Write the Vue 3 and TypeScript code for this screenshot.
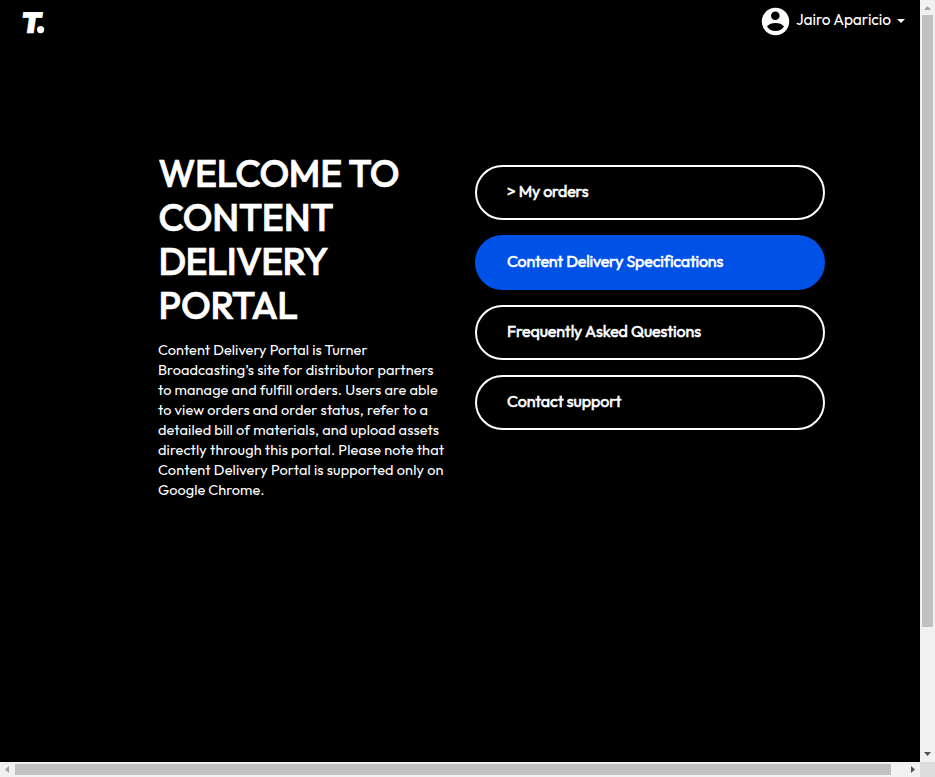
<script setup lang="ts">
import { nextTick, onMounted, ref } from 'vue'

interface Line {
  text: string
  width: number
}

const heading: Line[] = [
  { text: 'WELCOME TO', width: 241 },
  { text: 'CONTENT', width: 175 },
  { text: 'DELIVERY', width: 170 },
  { text: 'PORTAL', width: 139.5 },
]

const intro: Line[] = [
  { text: 'Content Delivery Portal is Turner', width: 209.5 },
  { text: 'Broadcasting’s site for distributor partners', width: 275.5 },
  { text: 'to manage and fulfill orders. Users are able', width: 279 },
  { text: 'to view orders and order status, refer to a', width: 270 },
  { text: 'detailed bill of materials, and upload assets', width: 281 },
  { text: 'directly through this portal. Please note that', width: 286 },
  { text: 'Content Delivery Portal is supported only on', width: 285.5 },
  { text: 'Google Chrome.', width: 106.5 },
]

const links = [
  { text: '> My orders', width: 81.5, active: false },
  { text: 'Content Delivery Specifications', width: 215.5, active: true },
  { text: 'Frequently Asked Questions', width: 194, active: false },
  { text: 'Contact support', width: 114.5, active: false },
]

const root = ref<HTMLElement | null>(null)

// Tracks each line so that it fills its intended measure.
onMounted(async () => {
  await nextTick()
  root.value?.querySelectorAll<HTMLElement>('[data-measure]').forEach((el) => {
    const count = (el.textContent ?? '').length
    const natural = el.getBoundingClientRect().width
    const spacing = (Number(el.dataset.measure) - natural) / (count - 1)
    el.style.letterSpacing = `${spacing.toFixed(3)}px`
  })
})
</script>

<template>
  <div ref="root" class="window">
    <div class="page">
      <header class="topbar">
        <svg class="logo" width="24" height="24" viewBox="0 0 24 24" aria-label="T.">
          <text class="logo-letter" x="1.2" y="21.7" textLength="20" lengthAdjust="spacingAndGlyphs" transform="skewX(-8)">T</text>
          <circle cx="18.6" cy="18.6" r="3.6" />
        </svg>
        <div class="user">
          <svg class="avatar" width="29" height="29" viewBox="-0.5 -0.5 29 29">
            <circle cx="14" cy="14" r="13.7" fill="#fff" />
            <circle cx="13.8" cy="8.3" r="4.3" fill="#000" />
            <path d="M5.5 19.1C7.2 16.6 10.5 15.6 14 15.6s6.8 1 8.5 3.5C20.7 22.1 17.5 23.6 14 23.6s-6.7-1.5-8.5-4.5z" fill="#000" />
          </svg>
          <span class="name" data-measure="95">Jairo Aparicio</span>
          <span class="caret"></span>
        </div>
      </header>
      <main class="content">
        <section class="welcome">
          <h1>
            <span v-for="l in heading" :key="l.text" class="row"><span :data-measure="l.width">{{ l.text }}</span></span>
          </h1>
          <p>
            <span v-for="l in intro" :key="l.text" class="row"><span :data-measure="l.width">{{ l.text }}</span></span>
          </p>
        </section>
        <nav class="links">
          <a v-for="l in links" :key="l.text" class="pill" :class="{ active: l.active }"><span :data-measure="l.width">{{ l.text }}</span></a>
        </nav>
      </main>
    </div>
    <div class="vbar">
      <svg width="15" height="15"><path d="M4 10h7L7.5 6z" fill="#a3a3a3" /></svg>
      <div class="vthumb"></div>
      <svg class="down" width="15" height="15"><path d="M4 5h7L7.5 9z" fill="#505050" /></svg>
    </div>
    <div class="hbar">
      <svg width="15" height="15"><path d="M9 4v7L5 7.5z" fill="#a3a3a3" /></svg>
      <div class="hthumb"></div>
      <svg class="right" width="15" height="15"><path d="M6 4v7l4-3.5z" fill="#505050" /></svg>
    </div>
    <div class="corner"></div>
  </div>
</template>

<style>
body {
  margin: 0;
  overflow: hidden;
}
</style>

<style scoped>
.window {
  display: grid;
  grid-template: 762px 15px / 920px 15px;
  width: 935px;
  height: 777px;
  overflow: hidden;
  font-family: Outfit, Lato, "Liberation Sans", sans-serif;
  color: #fff;
}
.page {
  background: #000;
}
svg {
  display: block;
  flex: none;
}
.topbar {
  display: flex;
  justify-content: space-between;
  align-items: flex-start;
  height: 45px;
  box-sizing: border-box;
  padding: 7px 15px 0 22px;
}
.logo {
  margin-top: 4px;
  fill: #fff;
  overflow: visible;
}
.logo-letter {
  font-size: 29px;
  font-weight: 900;
  stroke: #fff;
  stroke-width: 0.7px;
}
.user {
  display: flex;
  width: 144px;
}
.name {
  margin-left: 6px;
  font-size: 15.5px;
  line-height: 24px;
  white-space: nowrap;
}
.caret {
  width: 0;
  height: 0;
  margin: 12px 0 0 auto;
  border: 4px solid transparent;
  border-top-color: #fff;
  border-bottom: 0;
}
.content {
  display: flex;
  align-items: flex-start;
  padding: 106px 95px 0 158px;
}
.welcome {
  width: 317px;
}
h1 {
  margin: 0;
  padding-left: 0.5px;
  font-size: 37.5px;
  line-height: 44px;
  font-weight: 500;
  -webkit-text-stroke: 0.7px #fff;
}
p {
  margin: 13px 0 0;
  font-size: 14.5px;
  line-height: 20px;
}
.row {
  display: block;
  white-space: nowrap;
}
.links {
  display: flex;
  flex-direction: column;
  gap: 15px;
  width: 350px;
  padding-top: 14px;
}
.pill {
  display: block;
  height: 55px;
  box-sizing: border-box;
  padding: 0 30px;
  border: 2px solid #fff;
  border-radius: 28px;
  font-size: 16px;
  line-height: 49px;
  font-weight: 400;
  -webkit-text-stroke: 0.55px #fff;
  white-space: nowrap;
}
.active {
  background: #0052e7;
  border-color: #0052e7;
}
.vbar,
.hbar {
  display: flex;
  background: #f1f1f1;
}
.vbar {
  flex-direction: column;
}
.vthumb {
  width: 11px;
  height: 612px;
  margin-left: 2px;
  background: #c1c1c1;
}
.down {
  margin-top: auto;
}
.hthumb {
  width: 876px;
  height: 11px;
  margin-top: 2px;
  background: #c1c1c1;
}
.right {
  margin-left: auto;
}
.corner {
  background: #dcdcdc;
}
</style>
